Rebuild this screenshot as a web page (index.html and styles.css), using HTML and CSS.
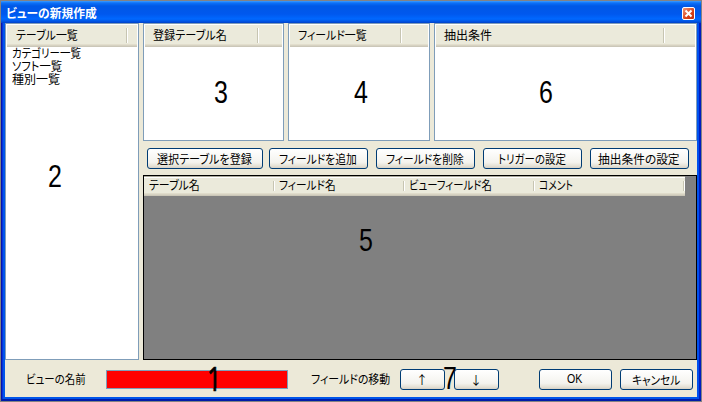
FILE: index.html
```html
<!DOCTYPE html>
<html lang="ja">
<head>
<meta charset="utf-8">
<title>ビューの新規作成</title>
<link rel="stylesheet" href="styles.css">
</head>
<body>
<div class="window">
  <header class="titlebar">
    <h1><span data-fit="91">ビューの新規作成</span></h1>
    <button class="close" aria-label="閉じる"><svg width="11" height="11" viewBox="0 0 11 11"><path d="M2.5 2.5l6 6M8.5 2.5l-6 6" stroke="#fff" stroke-width="2"/></svg></button>
  </header>
  <main class="client">
    <div class="body">
      <section class="list tables">
        <div class="head"><span data-fit="62">テーブル一覧</span></div>
        <ul>
          <li><span data-fit="69">カテゴリー一覧</span></li>
          <li><span data-fit="50">ソフト一覧</span></li>
          <li><span data-fit="48">種別一覧</span></li>
        </ul>
      </section>
      <div class="right">
        <div class="lists">
          <section class="list"><div class="head"><span data-fit="74">登録テーブル名</span></div></section>
          <section class="list"><div class="head"><span data-fit="69">フィールド一覧</span></div></section>
          <section class="list wide"><div class="head"><span data-fit="48">抽出条件</span></div></section>
        </div>
        <div class="actions">
          <button class="btn first"><span data-fit="95">選択テーブルを登録</span></button>
          <button class="btn"><span data-fit="78">フィールドを追加</span></button>
          <button class="btn"><span data-fit="78">フィールドを削除</span></button>
          <button class="btn"><span data-fit="68">トリガーの設定</span></button>
          <button class="btn"><span data-fit="82">抽出条件の設定</span></button>
        </div>
        <div class="grid">
          <div class="gridhead">
            <div><span data-fit="51">テーブル名</span></div>
            <div><span data-fit="57">フィールド名</span></div>
            <div><span data-fit="83">ビューフィールド名</span></div>
            <div><span data-fit="34">コメント</span></div>
          </div>
        </div>
      </div>
    </div>
    <footer class="footer">
      <label class="name"><span data-fit="60">ビューの名前</span></label>
      <div class="input"></div>
      <div class="move"><span data-fit="79">フィールドの移動</span></div>
      <button class="btn arrow"><span>↑</span></button>
      <button class="btn arrow down"><span>↓</span></button>
      <button class="btn ok"><span data-fit="15">OK</span></button>
      <button class="btn cancel"><span data-fit="48">キャンセル</span></button>
    </footer>
  </main>
</div>
<span class="mark m1">1</span>
<span class="mark m2">2</span>
<span class="mark m3">3</span>
<span class="mark m4">4</span>
<span class="mark m5">5</span>
<span class="mark m6">6</span>
<span class="mark m7">7</span>
<script src="fit.js"></script>
</body>
</html>
```
FILE: styles.css
```css
* { box-sizing: border-box; }
body { margin: 0; width: 702px; height: 402px; overflow: hidden; background: #848284; font: 12px/14px "Noto Sans CJK JP", "Liberation Sans", sans-serif; color: #000; padding: 1px; }
button { font: inherit; color: inherit; padding: 0; margin: 0; }
[data-fit] { display: inline-block; white-space: nowrap; transform-origin: 0 50%; font-feature-settings: "palt"; }
.window { width: 700px; height: 400px; background: linear-gradient(90deg, #0014ae 0 1px, #0831d9 1px 2px, #0055ea 2px 4px, #0055ea 4px 696px, #0050ee 696px 698px, #001dc0 698px); padding: 0 4px 4px; border-bottom: 2px solid #001ca8; border-radius: 2px 2px 0 0; }
.titlebar { height: 22px; margin: 0 -4px; padding: 0 6px 0 5px; display: flex; align-items: center; justify-content: space-between; background: linear-gradient(#3c9cff 0, #0c70f8 2px, #0058e6 5px, #0058ee 13px, #0068ff 18px, #0058e8 20px, #0040c8 22px); }
h1 { margin: 2px 0 0; font-size: 12px; line-height: 18px; font-weight: 700; color: #fff; }
.close { width: 13px; height: 13px; border: 1px solid #fff; border-radius: 2px; background: linear-gradient(135deg, #f09878, #d84018 60%, #c03010); display: flex; align-items: center; justify-content: center; margin-top: 3px; }
.close svg { flex: none; }
.client { height: 374px; background: #ece9d8; }
.body { display: flex; height: 337px; gap: 4px; }
.list { border: 1px solid #7f9db9; background: #fff; padding: 1px; }
.tables { width: 134px; }
.head { height: 22px; background: linear-gradient(#ebeadb 0 19px, #e2decd 19px 20px, #d6d2c2 20px 21px, #cbc7b8 21px); padding: 3px 0 0 9px; position: relative; }
.head::after { content: ""; position: absolute; right: 9px; top: 3px; width: 2px; height: 15px; background: linear-gradient(90deg, #c7c5b2 50%, #fff 50%); }
.right .head { padding-left: 8px; }
.lists .list:nth-child(1) .head::after { right: 23px; }
.lists .list:nth-child(2) .head::after { right: 26px; }
.lists .list:nth-child(3) .head::after { right: 30px; }
ul { list-style: none; margin: -1px 0 0; padding: 0 0 0 5px; }
li { height: 13px; line-height: 13px; }
.right { flex: 1; display: flex; flex-direction: column; min-width: 0; }
.lists { display: grid; grid-template-columns: 141px 142px 1fr; column-gap: 4px; height: 118px; }
.actions { display: flex; margin: 7px 0 6px 4px; gap: 8px; }
.btn { height: 21px; width: 99px; padding: 0 1px 1px 0; border: 1px solid #003c74; border-radius: 3px; background: linear-gradient(#fff, #f4f3ee 70%, #e4e0d4 90%, #d6d0c5); line-height: 17px; display: flex; justify-content: center; align-items: center; flex: none; }
.first { width: 116px; margin-right: -2px; }
.grid { flex: 1; border: 1px solid #000; background: #808080; }
.gridhead { width: 541px; height: 20px; display: grid; grid-template-columns: 130px 130px 130px 1fr; background: linear-gradient(#aaa899 0 1px, #fff 1px 2px, #ebeadb 2px 17px, #e0dccb 17px 18px, #d6d2c2 18px 19px, #cbc7b8 19px); }
.gridhead div { position: relative; padding: 2px 0 0 5px; }
.gridhead div::after { content: ""; position: absolute; right: -1px; top: 5px; width: 2px; height: 10px; background: linear-gradient(90deg, #c7c5b2 50%, #fff 50%); }
.gridhead div:last-child::after { right: 0; }
.footer { height: 37px; padding: 9px 4px 0 21px; display: flex; align-items: flex-start; }
.name { width: 80px; padding-top: 3px; }
.input { width: 182px; height: 19px; margin-top: 1px; border: 1px solid #7f9db9; background: #f00; }
.move { width: 112px; padding: 3px 0 0 23px; }
.arrow { width: 45px; }
.down { margin-left: 9px; }
.ok { width: 73px; margin-left: 40px; padding: 0; font-family: "Liberation Sans", sans-serif; }
.ok span { margin-left: -2px; }
.cancel { width: 73px; margin-left: 8px; padding-right: 0; }
.mark { position: absolute; font: 32px/32px "Liberation Sans", sans-serif; width: 18px; text-align: center; transform: scaleX(.78); }
.m1 { left: 205px; top: 363px; font-family: "Noto Sans", sans-serif; -webkit-text-stroke: .6px #000; }
.m2 { left: 46px; top: 160px; }
.m3 { left: 212px; top: 76px; }
.m4 { left: 352px; top: 76px; }
.m5 { left: 357px; top: 224px; }
.m6 { left: 537px; top: 76px; }
.m7 { left: 441px; top: 362px; }
```
FILE: fit.js
```js
// Condense each label to its nominal dialog-font width.
document.querySelectorAll('[data-fit]').forEach(function (el) {
  var target = Number(el.dataset.fit);
  var natural = el.offsetWidth;
  el.style.transform = 'scaleX(' + target / natural + ')';
  el.style.marginRight = (target - natural) + 'px';
});
```
